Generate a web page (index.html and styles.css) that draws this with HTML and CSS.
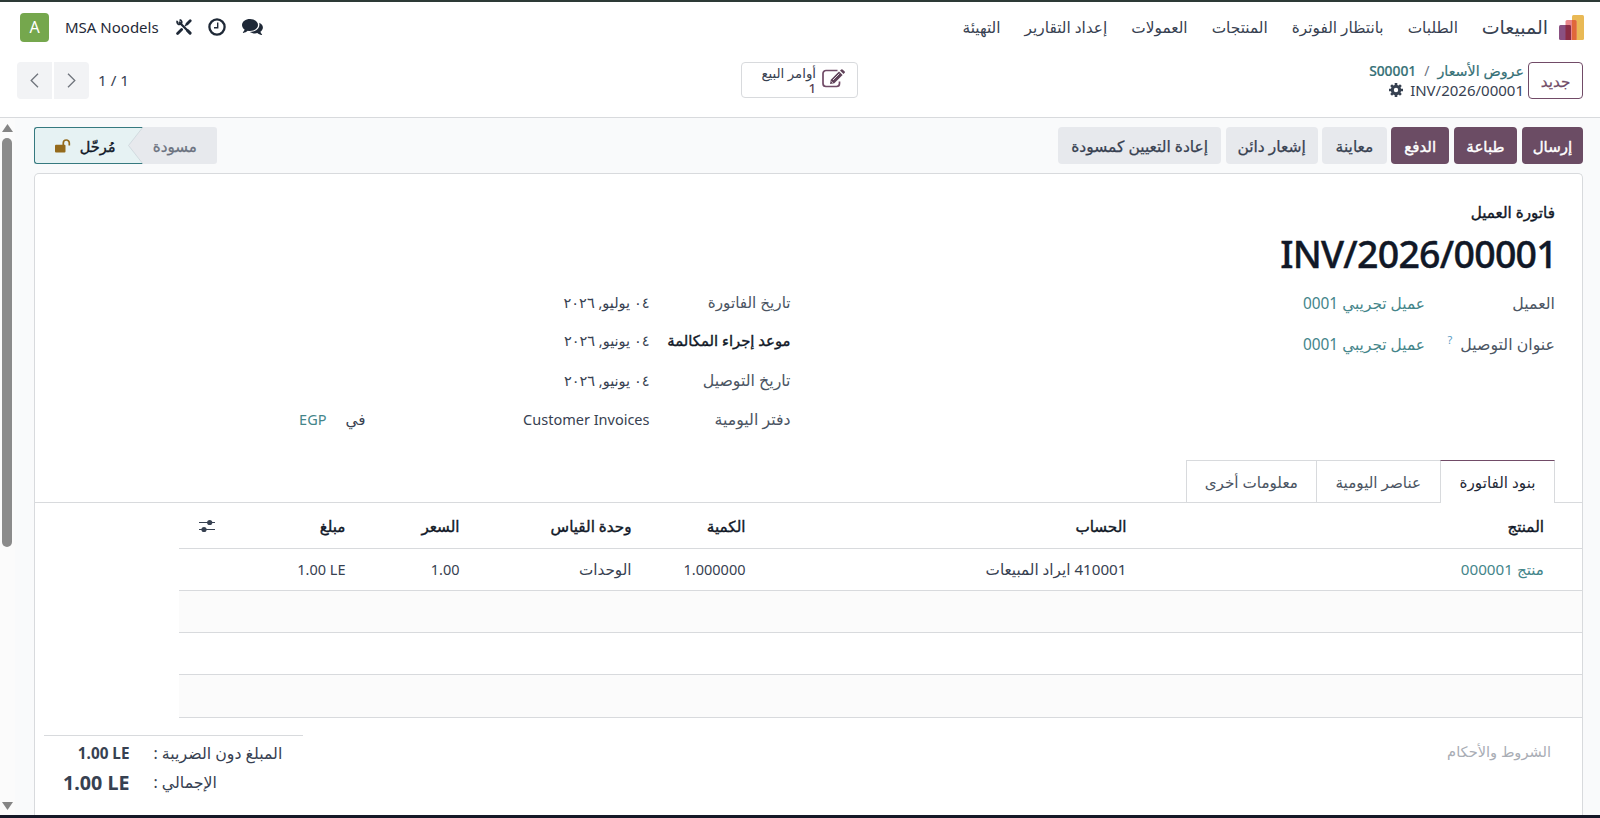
FILE: index.html
```html
<!DOCTYPE html>
<html lang="ar" dir="rtl">
<head>
<meta charset="utf-8">
<title>INV/2026/00001</title>
<link rel="stylesheet" href="styles.css">
</head>
<body>
<div class="app">
  <nav class="navbar">
    <svg class="logo" viewBox="0 0 25 25"><rect x="13" y="0" width="12" height="25" rx="1.5" fill="#e9b955"/><rect x="6.500" y="5" width="11" height="20" rx="1.500" fill="#e8868a"/><rect x="0" y="10" width="12" height="15" rx="1.500" fill="#8a5182"/><path d="M13 5h3a1.500 1.500 0 0 1 1.500 1.500V25H13z" fill="#e0683a"/><path d="M6.500 10H10.500a1.500 1.500 0 0 1 1.500 1.500V25H6.500z" fill="#8b2d45"/></svg>
    <span class="brand">المبيعات</span>
    <div class="menu"><span>الطلبات</span><span>بانتظار الفوترة</span><span>المنتجات</span><span>العمولات</span><span>إعداد التقارير</span><span>التهيئة</span></div>
    <div class="systray" dir="ltr">
      <span class="avatar">A</span>
      <span class="company">MSA Noodels</span>
      <svg class="tools" viewBox="0 0 16 16"><path d="M3.500 3.500L13.500 13.500" stroke="#1f2937" stroke-width="2.300" stroke-linecap="round"/><path d="M11.500 11.500l2.600 2.600" stroke="#1f2937" stroke-width="3" stroke-linecap="round"/><path d="M1.600 14.400L5.600 10.400M11 5L14.200 1.800" stroke="#1f2937" stroke-width="2.800" stroke-linecap="round"/><path d="M9 7l1.500-1.500" stroke="#1f2937" stroke-width="1.500"/><path d="M1.300 1.800C.4 4.300 2.600 6.200 4.900 5.100 6.400 3.700 5.800 1.200 3.600.8" fill="none" stroke="#1f2937" stroke-width="1.700"/></svg>
      <svg class="clock" viewBox="0 0 18 18" fill="none" stroke="#1f2937"><circle cx="9" cy="9" r="7.600" stroke-width="2.300"/><path d="M9.700 4.500v5.200H6" stroke-width="1.400"/></svg>
      <svg class="chat" viewBox="0 0 21 17" fill="#1f2937"><path d="M8 0c4.400 0 8 2.600 8 6s-3.600 6-8 6c-.8 0-1.500-.1-2.200-.2C4.400 13 3 13.700 1.200 13.900c-.4 0-.5-.4-.2-.7.7-.7 1.300-1.400 1.600-2.600C1 9.500 0 7.900 0 6 0 2.600 3.600 0 8 0z"/><path d="M17.400 3.800c2.100 1 3.500 2.700 3.500 4.700 0 1.700-1 3.200-2.500 4.300.3 1.100.9 1.800 1.600 2.500.3.300.1.700-.3.700-1.700-.2-3.100-.9-4.400-1.900-.7.200-1.400.3-2.200.3-2 0-3.900-.6-5.300-1.500 5.200 0 9.600-2.900 9.600-6.900 0-.8-.1-1.500 0-2.200z"/></svg>
    </div>
  </nav>
  <header class="panel">
    <div class="panel-start">
      <button class="btn-new">جديد</button>
      <div class="crumbs">
        <div class="crumb-line"><span class="crumb">عروض الأسعار</span><span class="sep">/</span><span class="crumb code">S00001</span></div>
        <div class="crumb-line second"><span class="current">INV/2026/00001</span><svg class="gear" viewBox="0 0 14 14"><circle cx="7" cy="7" r="3.700" fill="none" stroke="#374151" stroke-width="3"/><path d="M7 0v2.500M7 11.500V14M0 7h2.500M11.500 7H14M2.100 2.100l1.700 1.700M10.200 10.200l1.700 1.700M2.100 11.900l1.700-1.700M10.200 3.800l1.700-1.700" stroke="#374151" stroke-width="2.600"/></svg></div>
      </div>
    </div>
    <div class="stat">
      <svg class="edit" viewBox="0 0 23 20"><path d="M15.500 1.500H4A3 3 0 0 0 1 4.500v10a3 3 0 0 0 3 3h10.500a3 3 0 0 0 3-3v-2" fill="none" stroke="#714b67" stroke-width="1.700"/><path d="M8 15l.8-4.300L17 2.500l3.600 3.600-8.300 8.200z" fill="#5f4259"/><path d="M18 1.600L19.300.4q.6-.5 1.200 0l2.200 2.200q.5.600 0 1.200L21.500 5z" fill="#5f4259"/><path d="M11 11l6.300-6.300M9.500 12.500l1.300 1.200" stroke="#fff" stroke-width=".8"/></svg>
      <div class="stat-text"><span>أوامر البيع</span><b>1</b></div>
    </div>
    <div class="pager" dir="ltr">
      <span class="pg first"><svg viewBox="0 0 9 15"><path d="M8 .7L1.200 7.500 8 14.300"/></svg></span><span class="pg last"><svg viewBox="0 0 9 15"><path d="M1 .7l6.800 6.800L1 14.300"/></svg></span>
      <span class="count">1 / 1</span>
    </div>
  </header>
  <main class="view">
    <div class="form">
      <div class="statusbar">
        <div class="actions"><button class="btn primary w1">إرسال</button><button class="btn primary w2">طباعة</button><button class="btn primary w3">الدفع</button><button class="btn w4">معاينة</button><button class="btn w5">إشعار دائن</button><button class="btn w6">إعادة التعيين كمسودة</button></div>
        <div class="states">
          <span class="draft">مسودة</span>
          <svg class="chevron" viewBox="0 0 15 37"><path d="M0 0H15V37H0z" fill="#e6f2f3"/><path d="M0 .5H15M0 36.500H15" stroke="#35797f"/><path d="M15 0L.5 18.500 15 37z" fill="#e7e9ed"/><path d="M15 0L.5 18.500 15 37" fill="none" stroke="#ccd5da" stroke-width=".8"/></svg>
          <span class="posted">مُرحّل<svg class="lock" viewBox="0 0 16 14"><rect x="0" y="5.800" width="10.500" height="7.700" rx="1" fill="#946a1b"/><path d="M8.300 6V4a3 3 0 0 1 6 0v2.500" fill="none" stroke="#946a1b" stroke-width="1.700"/></svg></span>
        </div>
      </div>
      <section class="sheet">
        <div class="doc-type">فاتورة العميل</div>
        <h1>INV/2026/00001</h1>
        <div class="groups">
          <div class="group g-right">
            <div class="field f1"><label>العميل</label><span class="val link">عميل تجريبي 0001</span></div>
            <div class="field f2"><label>عنوان التوصيل<sup>?</sup></label><span class="val link">عميل تجريبي 0001</span></div>
          </div>
          <div class="group g-left">
            <div class="field d1"><label>تاريخ الفاتورة</label><span class="val date">٠٤ يوليو, ٢٠٢٦</span></div>
            <div class="field d2"><label class="strong">موعد إجراء المكالمة</label><span class="val date">٠٤ يونيو, ٢٠٢٦</span></div>
            <div class="field d3"><label>تاريخ التوصيل</label><span class="val date">٠٤ يونيو, ٢٠٢٦</span></div>
            <div class="field d4"><label>دفتر اليومية</label><span class="val journal">Customer Invoices</span><span class="in">في</span><span class="link egp">EGP</span></div>
          </div>
        </div>
        <div class="tabs"><span class="tab t1">بنود الفاتورة</span><span class="tab t2">عناصر اليومية</span><span class="tab t3">معلومات أخرى</span></div>
        <div class="lines">
          <div class="row head"><span>المنتج</span><span>الحساب</span><span>الكمية</span><span>وحدة القياس</span><span>السعر</span><span>مبلغ</span><span><svg class="sliders" viewBox="0 0 16 14"><path d="M0 3.500h16M0 10.500h16" stroke="#374151" stroke-width="1.200"/><circle cx="10.700" cy="3.500" r="2.600" fill="#374151"/><circle cx="5" cy="10.500" r="2.600" fill="#374151"/></svg></span></div>
          <div class="row body"><span class="link">منتج 000001</span><span>410001 ايراد المبيعات</span><span class="num">1.000000</span><span>الوحدات</span><span class="num">1.00</span><span class="num"><bdi dir="ltr">1.00 LE</bdi></span><span></span></div>
          <div class="row odd"></div>
          <div class="row"></div>
          <div class="row odd"></div>
        </div>
        <div class="footer">
          <div class="terms">الشروط والأحكام</div>
          <div class="totals">
            <div class="total"><span class="tl">المبلغ دون الضريبة :</span><b dir="ltr">1.00 LE</b></div>
            <div class="total grand"><span class="tl">الإجمالي :</span><b dir="ltr">1.00 LE</b></div>
          </div>
        </div>
      </section>
    </div>
    <div class="scrollbar"><svg class="arrow" viewBox="0 0 11 8"><path d="M5.500 0L11 8H0z"/></svg><i class="thumb"></i><svg class="arrow down" viewBox="0 0 11 8"><path d="M0 0H11L5.500 8z"/></svg></div>
  </main>
</div>
</body>
</html>
```
FILE: styles.css
```css
* { box-sizing: border-box; }
body { margin: 0; font-family: "Noto Sans", "DejaVu Sans", sans-serif; font-size: 15.200px; color: #374151; background: #fff; }
svg { display: block; flex: none; }
button { font: inherit; border: 0; margin: 0; padding: 0; }
span, label, button, b { white-space: nowrap; }
.app { height: 818px; display: flex; flex-direction: column; border-top: 2px solid #2d3a36; border-bottom: 3px solid #151827; overflow: hidden; }

.navbar { height: 54px; display: flex; align-items: center; padding: 0 16px 4px 20px; }
.logo { width: 25px; height: 25px; }
.brand { font-size: 19px; margin-right: 11px; width: 66px; }
.menu { display: flex; gap: 24px; margin-right: 24px; font-size: 15.350px; }
.systray { margin-right: auto; display: flex; align-items: center; color: #1f2937; }
.avatar { width: 29px; height: 29px; border-radius: 4px; background: #75a74d; color: #fff; display: flex; align-items: center; justify-content: center; font-size: 16px; }
.company { margin-left: 16px; width: 94px; font-size: 15px; }
.tools { width: 16px; height: 16px; margin-left: 17px; }
.clock { width: 18px; height: 18px; margin-left: 16px; }
.chat { width: 21px; height: 17px; margin-left: 16px; }

.panel { height: 62px; flex: none; border-bottom: 1px solid #d8dadd; display: grid; grid-template-columns: 725px 117px 1fr; padding: 6px 17px 0 17px; }
.panel-start { display: flex; gap: 4px; }
.btn-new { width: 55px; height: 37px; border: 1px solid #714b67; border-radius: 4px; background: #fff; color: #714b67; font-weight: 500; -webkit-text-stroke: .25px; }
.crumb-line { display: flex; align-items: center; height: 19px; font-size: 14px; margin-top: -1px; }
.crumb { color: #357076; font-weight: 500; -webkit-text-stroke: .2px; }
.crumb:first-child { font-size: 14.300px; }
.code { font-size: 13.800px; }
.sep { margin: 0 8px; color: #6b7280; }
.second { font-size: 15px; margin-top: 0; }
.gear { width: 14px; height: 14px; margin-right: 7px; }
.stat { height: 36px; border: 1px solid #d8dadd; border-radius: 4px; display: flex; padding: 0 12px; align-items: center; gap: 6px; }
.edit { width: 23px; height: 20px; margin-bottom: 2px; }
.stat-text { display: flex; flex-direction: column; font-size: 13.300px; line-height: 14px; }
.stat-text span { line-height: 15px; }
.stat-text b { font-weight: 500; color: #5b3f54; }
.pager { display: flex; height: 37px; margin-right: auto; align-items: center; }
.pg { width: 35px; height: 37px; background: #f2f3f5; display: flex; align-items: center; justify-content: center; }
.pg svg { width: 9px; height: 15px; fill: none; stroke: #6f747c; stroke-width: 1.300; }
.first { border-radius: 4px 0 0 4px; }
.last { border-radius: 0 4px 4px 0; margin-left: 2px; }
.count { margin-left: 9px; padding-bottom: 2px; }

.view { flex: 1; min-height: 0; display: flex; background: #f9fafb; }
.form { flex: 1; padding: 9px 17px 0 18.500px; min-width: 0; display: flex; flex-direction: column; }
.statusbar { height: 37px; flex: none; display: flex; justify-content: space-between; }
.actions { display: flex; gap: 4.700px; }
.btn { height: 37px; border-radius: 4px; background: #e7e9ed; color: #374151; font-weight: 500; font-size: 15.500px; -webkit-text-stroke: .25px; }
.primary { background: #6b4c64; color: #fff; -webkit-text-stroke: .4px; font-size: 15px; }
.w1 { width: 61.200px; }
.w2 { width: 63.500px; }
.w3 { width: 57.500px; }
.w4 { width: 64.500px; }
.w5 { width: 92px; }
.w6 { width: 162.500px; }
.states { display: flex; }
.draft { width: 74.500px; background: #e7e9ed; color: #6b7280; font-weight: 500; -webkit-text-stroke: .25px; border-radius: 0 3px 3px 0; display: flex; align-items: center; padding-right: 20px; }
.chevron { width: 15px; height: 37px; }
.posted { width: 94px; background: #e6f2f3; border: 1px solid #35797f; border-right: 0; border-radius: 3px 0 0 3px; color: #111827; font-size: 14.500px; -webkit-text-stroke: .4px; display: flex; align-items: center; justify-content: space-between; padding: 0 12px 0 20px; }
.lock { width: 16px; height: 14px; }

.sheet { flex: 1; margin-top: 9px; background: #fff; border: 1px solid #d8dadd; border-bottom: 0; border-radius: 5px 5px 0 0; padding-top: 26px; overflow: hidden; }
.doc-type { height: 24px; line-height: 24px; padding-right: 27px; color: #111827; -webkit-text-stroke: .4px; }
h1 { margin: 0; height: 58px; line-height: 59px; padding-right: 25px; font-size: 37.500px; font-weight: 500; letter-spacing: -.75px; color: #111827; -webkit-text-stroke: .4px; }
.groups { display: flex; padding-right: 27px; height: 178px; }
.g-right { width: 764.500px; }
.field { display: flex; align-items: center; color: #374151; height: 39px; }
.field label { width: 130px; color: #4b5563; }
.g-right label, .d3 label, .d4 label { font-size: 15.800px; }
.g-right .val { font-size: 15.400px; }
.field .strong { color: #111827; font-size: 14.800px; -webkit-text-stroke: .4px; }
.link, .field .link { color: #44858a; }
sup { color: #5b9bc4; font-size: 11px; margin-right: 8px; }
.g-left .field label { width: 141px; }
.f1 { height: 42px; }
.f2 { height: 40px; }
.d2 { height: 38px; }
.d3 { height: 42px; }
.d4 { height: 36px; }
.date, .num, .journal, .field .egp { font-size: 14.500px; }
.journal { width: 284px; }
.in { width: 39px; }

.tabs { display: flex; height: 43px; padding-right: 27px; border-bottom: 1px solid #d8dadd; }
.tab { height: 42px; border: 1px solid #d8dadd; border-right: 0; border-bottom: 0; display: flex; align-items: center; justify-content: center; color: #4b5563; }
.t1 { width: 115px; height: 43px; border-right: 1px solid #d8dadd; border-top-color: #714b67; background: #fff; color: #1f2937; }
.t2 { width: 124.500px; }
.t3 { width: 129.500px; }
.lines { margin-left: 144px; }
.row { height: 42px; border-bottom: 1px solid #d8dadd; display: grid; grid-template-columns: 417.500px 381px 114px 172px 114px 131px 36px; padding-right: 38px; align-items: center; }
.head { height: 46px; color: #111827; -webkit-text-stroke: .4px; }
.body { height: 42.300px; padding-bottom: 1px; }
.row:last-child { height: 42.600px; }
.odd { background: #fbfbfb; }
.sliders { width: 16px; height: 14px; }
.footer { display: flex; justify-content: space-between; padding: 17px 0 0 9px; }
.terms { padding: 6px 31px 0 0; color: #a9adb5; font-size: 14.600px; }
.totals { width: 259px; border-top: 1px solid #d8dadd; padding-top: 3px; }
.total { height: 29px; display: flex; align-items: center; justify-content: flex-end; font-size: 15.800px; }
.tl { margin-left: 24px; }
.total b { width: 86px; text-align: right; font-size: 15.300px; }
.total.grand b { font-size: 19.700px; }

.scrollbar { width: 15px; background: #fbfbfb; display: flex; flex-direction: column; align-items: center; padding: 6px 1px 5px 0; }
.arrow { width: 11px; height: 8px; fill: #858585; }
.thumb { width: 10px; height: 409px; border-radius: 5px; background: #8b8b8b; margin-top: 6px; }
.down { margin-top: auto; }
```
